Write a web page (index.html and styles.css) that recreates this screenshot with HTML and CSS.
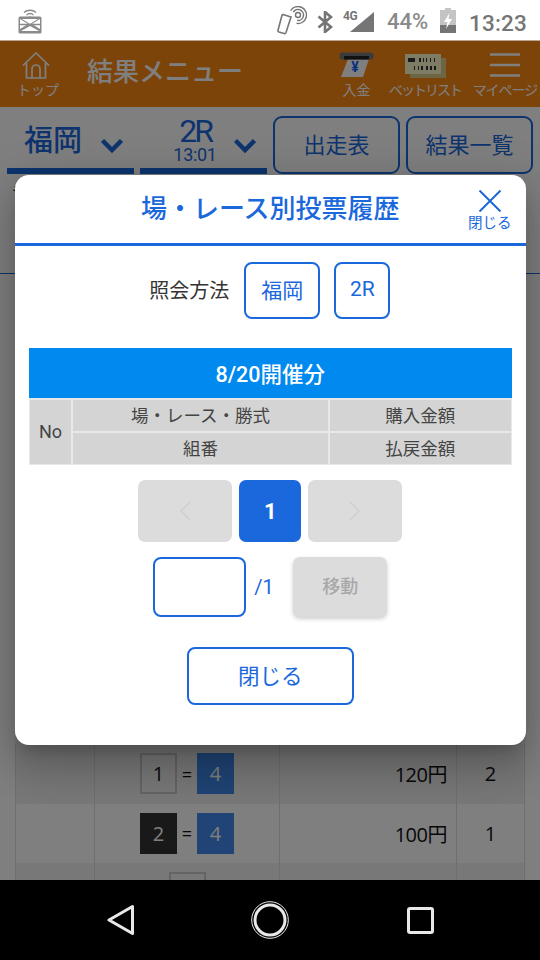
FILE: index.html
```html
<!DOCTYPE html>
<html>
<head>
  <title>場・レース別投票履歴</title>
  <link rel="stylesheet" href="styles.css">
</head>
<body>

  <div class="status-bar">
    <svg class="st-notify" width="24" height="27" viewBox="0 0 24 27">
      <path d="M6 5.5C9 2.5 15 2.5 18 5.5M8.5 8C10.500 6.300 13.500 6.300 15.500 8" fill="none" stroke="#8a8a8a" stroke-width="1.3"/>
      <path d="M10.500 9.500h3L12 11z" fill="#8a8a8a"/>
      <rect x="0.500" y="9.500" width="23" height="17" rx="1.500" fill="#8a8a8a"/>
      <path d="M2 12l8 5-8 5zM22 12l-8 5 8 5zM4 12h16l-8 5zM3 24l9-5 9 5z" fill="#fff"/>
      <path d="M2 17.500h20" stroke="#8a8a8a" stroke-width="1.500"/>
    </svg>
    <svg class="st-nfc" width="30" height="30" viewBox="0 0 30 30">
      <path d="M6 8.500l8 2.500-5 15.500c-.3.800-1 1.200-1.800 1L2 26c-.8-.3-1.200-1-1-1.800L5 9.300c.2-.6.500-.9 1-.8z" fill="none" stroke="#757575" stroke-width="1.600"/>
      <circle cx="21" cy="9" r="2.500" fill="none" stroke="#757575" stroke-width="1.400"/>
      <path d="M16.240 6.250A5.500 5.500 0 1 1 20.040 14.420M13.640 4.750A8.500 8.500 0 1 1 19.500 17.400" fill="none" stroke="#757575" stroke-width="1.400"/>
    </svg>
    <svg class="st-bt" width="16" height="22" viewBox="0 0 16 22">
      <path d="M1.500 5.500L14 16l-6 5V1l6 5L1.500 16.500" fill="none" stroke="#757575" stroke-width="2.600"/>
    </svg>
    <div class="st-signal">
      <span class="st-4g">4G</span>
      <svg width="24" height="20" viewBox="0 0 24 20"><path d="M24 0V20H0z" fill="#757575"/></svg>
    </div>
    <span class="st-pct">44%</span>
    <svg class="st-batt" width="16" height="25" viewBox="0 0 16 25">
      <path d="M5 0h6v2h5v23H0V2h5z" fill="#c4c4c4"/>
      <path d="M0 17h16v8H0z" fill="#757575"/>
      <path d="M9.500 5L4 14h3.500L6 21l6-10H8.500z" fill="#fff"/>
    </svg>
    <span class="st-time">13:23</span>
  </div>

  <div class="page">
    <div class="app-header">
      <div class="hd-item hd-top">
        <svg width="28" height="27" viewBox="0 0 28 27">
          <path d="M1 13.500L14 1l13 12.500M4.500 11v15h19V11M10 26v-9a4 4 0 0 1 8 0v9" fill="none" stroke="#fff" stroke-width="1.700"/>
        </svg>
        <span>トップ</span>
      </div>
      <div class="hd-title">結果メニュー</div>
      <div class="hd-item hd-money">
        <svg width="35" height="26" viewBox="0 0 35 26">
          <path d="M9 7H30l-6 18H2z" fill="#fff"/>
          <rect x="0.500" y="0.500" width="34" height="7" rx="2.500" fill="#777"/>
          <rect x="5" y="4" width="25" height="3.500" fill="#222"/>
          <text x="16" y="20" class="yen">¥</text>
        </svg>
        <span>入金</span>
      </div>
      <div class="hd-item hd-bet">
        <svg width="41" height="24" viewBox="0 0 41 24">
          <rect x="5" y="4" width="36" height="20" fill="#d8cc88"/>
          <rect x="0" y="0" width="36" height="20" fill="#fff8cc"/>
          <path d="M3 4h7v4H3zM14 4h2v4h-2zM18 4h1v4h-1zM21 4h1v4h-1zM25 4h1v4h-1zM29 4h1v4h-1zM9 12h1v4H9zM13 12h1v4h-1zM16 12h2v4h-2zM21 12h2v4h-2zM25 12h2v4h-2zM29 12h2v4h-2z" fill="#333"/>
        </svg>
        <span>ベットリスト</span>
      </div>
      <div class="hd-item hd-my">
        <svg width="30" height="24" viewBox="0 0 30 24">
          <path d="M0 1.500h30M0 12h30M0 22.500h30" stroke="#fff" stroke-width="2.500"/>
        </svg>
        <span>マイページ</span>
      </div>
    </div>

    <div class="sub-nav">
      <div class="select">
        <span class="select-place">福岡</span>
        <svg class="chevron" width="24" height="16" viewBox="0 0 24 16"><path d="M2.500 2.500L12 12l9.500-9.500" fill="none" stroke="#1a68dc" stroke-width="4.500"/></svg>
      </div>
      <div class="select">
        <div class="select-race">
          <span class="race-no">2R</span>
          <span class="race-time">13:01</span>
        </div>
        <svg class="chevron" width="24" height="16" viewBox="0 0 24 16"><path d="M2.500 2.500L12 12l9.500-9.500" fill="none" stroke="#1a68dc" stroke-width="4.500"/></svg>
      </div>
      <button class="nav-btn">出走表</button>
      <button class="nav-btn">結果一覧</button>
    </div>

    <div class="note">チ</div>

    <div class="results">
      <div class="results-top"></div>
      <div class="res-row">
        <div class="res-cell"></div>
        <div class="res-cell res-combo"><span class="boat boat-white">1</span><span class="eq">=</span><span class="boat boat-blue">4</span></div>
        <div class="res-cell res-amount">120円</div>
        <div class="res-cell res-rank">2</div>
      </div>
      <div class="res-row res-alt">
        <div class="res-cell"></div>
        <div class="res-cell res-combo"><span class="boat boat-black">2</span><span class="eq">=</span><span class="boat boat-blue">4</span></div>
        <div class="res-cell res-amount">100円</div>
        <div class="res-cell res-rank">1</div>
      </div>
      <div class="res-row">
        <div class="res-cell"></div>
        <div class="res-cell res-combo res-last"><span class="boat boat-white"></span></div>
        <div class="res-cell"></div>
        <div class="res-cell"></div>
      </div>
    </div>

    <div class="overlay">
      <div class="modal">
        <div class="modal-head">
          <div class="modal-title">場・レース別投票履歴</div>
          <div class="modal-close">
            <svg width="24" height="22" viewBox="0 0 24 22"><path d="M1.500 .5L22.500 21.500M22.500 .5L1.500 21.500" stroke="#1a68dc" stroke-width="2"/></svg>
            <span>閉じる</span>
          </div>
        </div>

        <div class="query">
          <span class="query-label">照会方法</span>
          <button class="query-btn query-place">福岡</button>
          <button class="query-btn query-race">2R</button>
        </div>

        <div class="day-title">8/20開催分</div>
        <div class="history">
          <div class="h-cell h-no">No</div>
          <div class="h-cell">場・レース・勝式</div>
          <div class="h-cell">購入金額</div>
          <div class="h-cell">組番</div>
          <div class="h-cell">払戻金額</div>
        </div>

        <div class="pager">
          <div class="pg-btn pg-arrow">
            <svg width="12" height="20" viewBox="0 0 12 20"><path d="M11 1L2 10l9 9" fill="none" stroke="#cfcfcf" stroke-width="1.500"/></svg>
          </div>
          <div class="pg-btn pg-current">1</div>
          <div class="pg-btn pg-arrow">
            <svg width="12" height="20" viewBox="0 0 12 20"><path d="M1 1l9 9-9 9" fill="none" stroke="#cfcfcf" stroke-width="1.500"/></svg>
          </div>
        </div>

        <div class="jump">
          <input type="text" class="jump-input">
          <span class="jump-total">/1</span>
          <button class="jump-btn">移動</button>
        </div>

        <button class="close-btn">閉じる</button>
      </div>
    </div>
  </div>

  <div class="nav-bar">
    <svg class="nav-back" width="28" height="32" viewBox="0 0 28 32"><path d="M25.500 2.500V29.500L2 16z" fill="none" stroke="#e8e8e8" stroke-width="3" stroke-linejoin="round"/></svg>
    <svg class="nav-home" width="38" height="38" viewBox="0 0 38 38">
      <circle cx="19" cy="19" r="18.300" fill="none" stroke="#e8e8e8" stroke-width="1"/>
      <circle cx="19" cy="19" r="15" fill="none" stroke="#e8e8e8" stroke-width="3"/>
    </svg>
    <svg width="27" height="27" viewBox="0 0 27 27"><rect x="1.500" y="1.500" width="24" height="24" rx="1.500" fill="none" stroke="#e8e8e8" stroke-width="3"/></svg>
  </div>

</body>
</html>
```

FILE: styles.css
```css
* {
  box-sizing: border-box;
}

body {
  width: 540px;
  height: 960px;
  margin: 0;
  display: flex;
  flex-direction: column;
  overflow: hidden;
  font-family: Roboto, "Noto Sans CJK JP", sans-serif;
  background-color: #fff;
}

button {
  font-family: inherit;
  padding: 0 0 4px;
  background: none;
  cursor: pointer;
}

/* status bar */
.status-bar {
  height: 41px;
  flex: none;
  display: flex;
  align-items: flex-start;
  background-color: #fff;
  border-bottom: 1px solid #bba68f;
  font-weight: 500;
  color: #757575;
}

.st-notify {
  margin: 7px 0 0 18px;
}

.st-nfc {
  margin: 6px 0 0 235px;
}

.st-bt {
  margin: 11px 0 0 10px;
}

.st-signal {
  width: 30px;
  height: 20px;
  margin: 12px 0 0 11px;
  position: relative;
  display: flex;
  justify-content: flex-end;
}

.st-4g {
  position: absolute;
  left: -1px;
  top: -1px;
  font-size: 12px;
  line-height: 11px;
  font-weight: 700;
  letter-spacing: -.5px;
}

.st-pct {
  margin: 8px 0 0 13px;
  width: 46px;
  font-size: 22px;
  line-height: 28px;
  color: #8a8a8a;
}

.st-batt {
  margin: 8px 0 0 7px;
}

.st-time {
  margin: 9px 0 0 13px;
  font-size: 22.500px;
  line-height: 28px;
  letter-spacing: .2px;
}

/* page below the dimmed layer */
.page {
  flex: 1;
  position: relative;
  overflow: hidden;
  background-color: #fff;
}

.app-header {
  height: 66px;
  display: flex;
  align-items: flex-start;
  background-color: #fb8812;
  color: #fff;
}

.hd-item {
  display: flex;
  flex-direction: column;
  align-items: center;
  font-size: 14px;
  line-height: 16px;
  white-space: nowrap;
}

.hd-top {
  width: 42px;
  margin: 11px 0 0 17px;
  gap: 3px;
}

.hd-top svg {
  margin-right: 4px;
}

.hd-title {
  width: 156px;
  margin: 12px 0 0 28px;
  font-size: 26px;
  line-height: 38px;
  font-weight: 500;
  white-space: nowrap;
}

.yen {
  font-size: 14px;
  font-weight: 700;
  fill: #1060ff;
  text-anchor: middle;
}

.hd-money {
  width: 35px;
  margin: 11px 0 0 96px;
  gap: 4px;
}

.hd-bet {
  width: 72px;
  margin: 13px 0 0 15px;
  gap: 4px;
  letter-spacing: -2px;
}

.hd-my {
  width: 66px;
  margin: 12px 0 0 11px;
  gap: 5px;
  letter-spacing: -1px;
}

.sub-nav {
  height: 68px;
  padding: 9px 7px 1px;
  display: flex;
  gap: 6px;
}

.select {
  width: 127px;
  display: flex;
  align-items: center;
  border-bottom: 6px solid #1a68dc;
  color: #1a68dc;
}

.chevron {
  margin: 8px 0 0 18px;
}

.select-place {
  margin: -2px 0 0 17px;
  font-size: 29px;
  font-weight: 500;
  line-height: 40px;
}

.select-race {
  width: 94px;
  margin-left: 8px;
  display: flex;
  flex-direction: column;
  align-items: center;
}

.select-race + .chevron {
  margin-left: -9px;
}

.race-no {
  font-size: 32px;
  line-height: 30px;
  letter-spacing: -3px;
  margin-top: -6px;
}

.race-time {
  font-size: 18px;
  line-height: 17px;
  letter-spacing: -.3px;
}

.nav-btn {
  width: 127px;
  border: 2px solid #1a68dc;
  border-radius: 9px;
  color: #1a68dc;
  font-size: 22px;
  background-color: #fff;
}

.note {
  height: 99px;
  padding: 3px 0 0 12px;
  font-size: 16px;
  color: #111;
  border-bottom: 1px solid #1a68dc;
}

.results {
  margin: 0 15px;
  background-color: #f0f0f0;
}

.results-top {
  height: 470px;
}

.res-row {
  height: 59.500px;
  display: grid;
  grid-template-columns: 79px 185px 177px 1fr;
  background-color: #f0f0f0;
  border-left: 1px solid #dcdcdc;
  border-right: 1px solid #dcdcdc;
}

.res-alt {
  background-color: #fff;
}

.res-cell {
  display: flex;
  align-items: center;
  justify-content: center;
  font-size: 20px;
  color: #111;
  border-right: 1px solid #dcdcdc;
  font-family: "Open Sans", sans-serif;
}

.res-cell:last-child {
  border-right: none;
}

.res-last {
  align-items: flex-start;
  padding-top: 9px;
}

.res-amount {
  justify-content: flex-end;
  padding-right: 9px;
  font-family: "Open Sans", "Noto Sans CJK JP", sans-serif;
  letter-spacing: -.5px;
}

.boat {
  width: 37px;
  height: 41px;
  display: flex;
  align-items: center;
  justify-content: center;
  font-size: 20px;
}

.boat-white {
  background-color: #f0f0f0;
  border: 2px solid #c8c8c8;
  color: #111;
}

.boat-black {
  background-color: #333;
  color: #fff;
}

.boat-blue {
  background-color: #3f88eb;
  color: #fff;
}

.eq {
  width: 20px;
  text-align: center;
  font-size: 18px;
}

/* dialog */
.overlay {
  position: absolute;
  inset: 0;
  padding-bottom: 1px;
  display: flex;
  align-items: center;
  justify-content: center;
  background-color: rgba(0, 0, 0, .5);
}

.modal {
  width: 511px;
  height: 570px;
  padding: 0 14px 0 14.500px;
  display: flex;
  flex-direction: column;
  align-items: center;
  background-color: #fff;
  border-radius: 14px;
  box-shadow: 0 11px 15px -7px rgba(0, 0, 0, .2), 0 24px 38px 3px rgba(0, 0, 0, .14), 0 9px 46px 8px rgba(0, 0, 0, .12);
}

.modal-head {
  width: 511px;
  height: 71px;
  flex: none;
  position: relative;
  border-bottom: 3px solid #1a68dc;
  display: flex;
  align-items: flex-start;
  justify-content: center;
}

.modal-title {
  margin-top: 14px;
  font-size: 26px;
  line-height: 40px;
  font-weight: 500;
  color: #1a68dc;
}

.modal-close {
  position: absolute;
  top: 15px;
  right: 14px;
  width: 44px;
  display: flex;
  flex-direction: column;
  align-items: center;
  gap: 3px;
  color: #1a68dc;
  font-size: 14.500px;
  line-height: 18px;
  white-space: nowrap;
}

.query {
  margin-top: 16px;
  height: 57px;
  flex: none;
  display: flex;
  align-items: center;
  color: #333;
}

.query-label {
  font-size: 20px;
  margin: -2px 15px 0 -1px;
}

.query-btn {
  height: 57px;
  border: 2px solid #1a68dc;
  border-radius: 8px;
  background-color: #fff;
  color: #1a68dc;
  font-size: 21px;
}

.query-place {
  width: 76px;
}

.query-race {
  width: 56px;
  margin-left: 14px;
}

.day-title {
  width: 100%;
  margin-top: 29px;
  height: 50px;
  padding-bottom: 2px;
  flex: none;
  display: flex;
  align-items: center;
  justify-content: center;
  background-color: #0089ee;
  color: #fff;
  font-size: 21.500px;
  font-weight: 500;
}

.history {
  width: 100%;
  padding: 2px 1px 1px;
  display: grid;
  grid-template-columns: 41px 255px 1fr;
  grid-template-rows: 31px 31px;
  gap: 2px;
  background-color: #e8e8e8;
}

.h-cell {
  padding-bottom: 2px;
  display: flex;
  align-items: center;
  justify-content: center;
  background-color: #d4d4d4;
  color: #444;
  font-size: 17.500px;
}

.h-no {
  grid-row: span 2;
  font-size: 18px;
}

.pager {
  margin-top: 15px;
  display: flex;
  gap: 7px;
  flex: none;
}

.pg-btn {
  height: 62px;
  display: flex;
  align-items: center;
  justify-content: center;
  border-radius: 7px;
}

.pg-arrow {
  width: 94px;
  background-color: #dcdcdc;
}

.pg-current {
  width: 62px;
  background-color: #1a68dc;
  color: #fff;
  font-size: 22px;
  font-weight: 700;
}

.jump {
  margin-top: 15px;
  height: 60px;
  flex: none;
  display: flex;
  align-items: center;
}

.jump-input {
  width: 93px;
  height: 60px;
  border: 2px solid #1a68dc;
  border-radius: 8px;
  background-color: #fff;
}

.jump-total {
  width: 47px;
  padding-left: 8px;
  color: #1a68dc;
  font-size: 20px;
}

.jump-btn {
  width: 94px;
  height: 60px;
  border: none;
  border-radius: 7px;
  background-color: #dcdcdc;
  color: #a8a8a8;
  font-size: 18px;
  font-weight: 500;
  box-shadow: 0 2px 4px rgba(0, 0, 0, .2);
}

.close-btn {
  margin-top: 30px;
  width: 167px;
  height: 58px;
  flex: none;
  border: 2px solid #1a68dc;
  border-radius: 8px;
  background-color: #fff;
  color: #1a68dc;
  font-size: 21.500px;
}

/* android buttons */
.nav-bar {
  height: 80px;
  flex: none;
  display: flex;
  align-items: center;
  background-color: #000;
  padding-left: 107px;
  gap: 116px;
}

.nav-home {
  margin-right: 2px;
}
```
